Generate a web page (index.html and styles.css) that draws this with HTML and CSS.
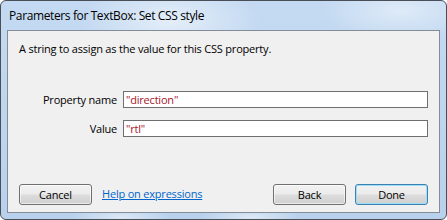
FILE: index.html
```html
<!DOCTYPE html>
<html>
<head>
<meta charset="utf-8">
<link rel="stylesheet" href="styles.css">
</head>
<body>
<div class="window">
  <div class="titlebar">Parameters for TextBox: Set CSS style</div>
  <div class="client">
    <p class="desc">A string to assign as the value for this CSS property.</p>
    <div class="form">
      <label class="lbl">Property name</label>
      <div class="input">"direction"</div>
      <label class="lbl">Value</label>
      <div class="input">"rtl"</div>
    </div>
    <div class="footer">
      <button class="btn">Cancel</button>
      <a class="help" href="#">Help on expressions</a>
      <span class="spacer"></span>
      <button class="btn">Back</button>
      <button class="btn default">Done</button>
    </div>
  </div>
</div>
</body>
</html>
```
FILE: styles.css
```css
html, body {
  margin: 0;
  padding: 0;
  background: #ffffff;
}
body {
  width: 447px;
  height: 220px;
  font-family: "Open Sans", "Noto Sans", sans-serif;
  font-size: 11px;
  letter-spacing: -0.2px;
  color: #000;
}
.window {
  box-sizing: border-box;
  width: 447px;
  height: 220px;
  border: 1px solid #4a4f57;
  border-radius: 6px;
  display: flex;
  flex-direction: column;
  background:
    radial-gradient(ellipse 90px 40px at 170px 20px, rgba(255,255,255,0.55), rgba(255,255,255,0) 100%),
    radial-gradient(ellipse 80px 30px at 400px 10px, rgba(255,255,255,0.45), rgba(255,255,255,0) 100%),
    radial-gradient(ellipse 50px 10px at 120px 216px, rgba(255,255,255,0.5), rgba(255,255,255,0) 100%),
    radial-gradient(ellipse 50px 10px at 250px 216px, rgba(255,255,255,0.5), rgba(255,255,255,0) 100%),
    linear-gradient(to bottom, #c4daf2, #b9d1ec);
  overflow: hidden;
}
.titlebar {
  height: 29px;
  flex: none;
  box-sizing: border-box;
  padding-left: 8px;
  line-height: 29px;
  font-size: 12px;
  letter-spacing: -0.38px;
  color: #000;
  white-space: nowrap;
}
.client {
  flex: 1;
  margin: 0 6px 6px 6px;
  border: 1px solid #838c97;
  background: #f0f0f0;
  display: flex;
  flex-direction: column;
  min-height: 0;
}
.desc {
  margin: 10px 0 0 11px;
  line-height: 15px;
  height: 15px;
}
.form {
  margin-top: 35px;
  display: grid;
  grid-template-columns: 109px 305px;
  grid-auto-rows: 17px;
  column-gap: 6px;
  row-gap: 12px;
}
.lbl {
  text-align: right;
  line-height: 17px;
  white-space: nowrap;
}
.input {
  box-sizing: border-box;
  height: 17px;
  border: 1px solid #6f6f6f;
  background: #fff;
  padding-left: 2px;
  line-height: 15px;
  color: #a8152b;
  white-space: nowrap;
}
.footer {
  margin-top: auto;
  display: flex;
  align-items: center;
  padding: 0 11px 7px 11px;
}
.btn {
  box-sizing: border-box;
  width: 73px;
  height: 21px;
  padding: 0;
  margin: 0;
  border: 1px solid #707070;
  border-radius: 3px;
  font-family: inherit;
  font-size: 11px;
  letter-spacing: -0.2px;
  color: #000;
  background: linear-gradient(to bottom, #f2f2f2 0%, #ebebeb 48%, #dddddd 52%, #cfcfcf 100%);
  box-shadow: inset 0 0 0 1px rgba(255,255,255,0.6);
}
.btn + .btn {
  margin-left: 9px;
}
.btn.default {
  border-color: #3c7fb1;
  box-shadow: inset 0 0 0 1px #9edff8;
}
.help {
  margin-left: 10px;
  color: #0066cc;
  text-decoration: underline;
  line-height: 15px;
  margin-top: -2px;
}
.spacer {
  flex: 1;
}
```
